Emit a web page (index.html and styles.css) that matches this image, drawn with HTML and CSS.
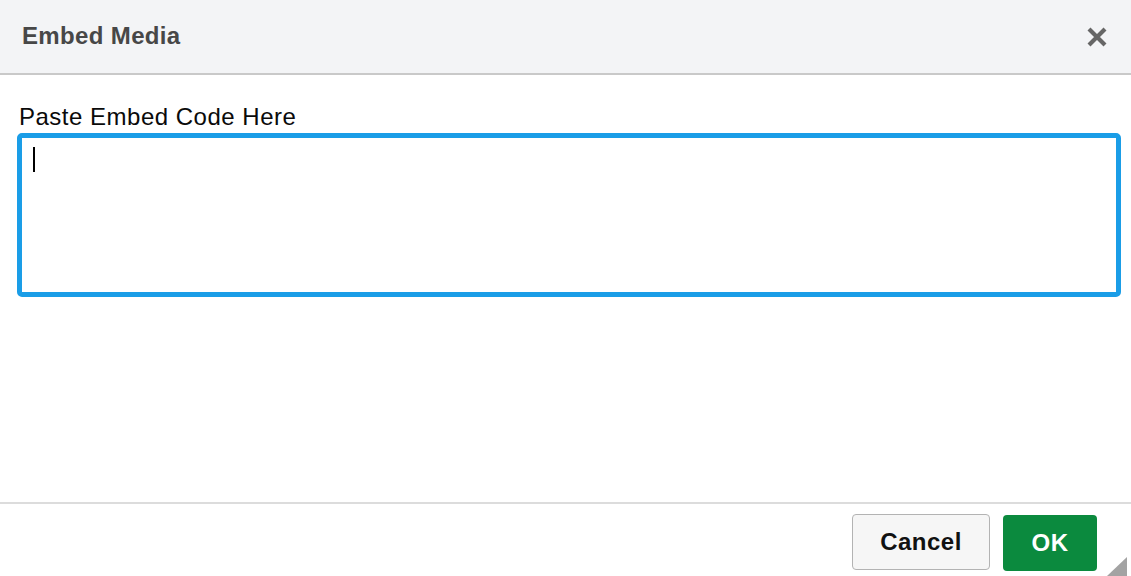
FILE: index.html
```html
<!DOCTYPE html>
<html>
<head>
<meta charset="utf-8">
<link rel="stylesheet" href="styles.css">
</head>
<body>
<div class="dialog">
  <div class="header">
    <div class="title">Embed Media</div>
    <button class="close" aria-label="Close">
      <svg width="22" height="22" viewBox="0 0 22 22"><path d="M3 3L19 19M19 3L3 19" stroke="#666" stroke-width="4.2" stroke-linecap="butt"/></svg>
    </button>
  </div>
  <div class="body">
    <label class="label">Paste Embed Code Here</label>
    <div class="textarea"><span class="caret"></span></div>
  </div>
  <div class="footer">
    <button class="btn cancel">Cancel</button>
    <button class="btn ok">OK</button>
    <span class="resize"></span>
  </div>
</div>
</body>
</html>
```
FILE: styles.css
```css
html, body { margin: 0; padding: 0; }
body {
  width: 1131px;
  height: 576px;
  overflow: hidden;
  background: #fff;
  font-family: "Liberation Sans", Arial, sans-serif;
}
.dialog {
  height: 576px;
  display: flex;
  flex-direction: column;
  position: relative;
}
.header {
  box-sizing: border-box;
  background: #f3f4f6;
  border-bottom: 2px solid #c9c9c9;
  display: flex;
  align-items: center;
  justify-content: space-between;
  padding: 0 22px 0 22px;
  height: 75px;
}
.title {
  font-size: 24px;
  font-weight: bold;
  color: #474747;
  margin-top: -1px;
  letter-spacing: 0.35px;
}
.close {
  border: 0;
  background: none;
  padding: 0;
  width: 22px;
  height: 22px;
  margin-top: 1px;
  margin-right: 1px;
  display: block;
}
.close svg { display: block; }
.body {
  flex: 1;
  padding: 29px 10px 0 17px;
}
.label {
  display: block;
  font-size: 24px;
  letter-spacing: 0.5px;
  color: #0a0a0a;
  margin-left: 2px;
  line-height: 26px;
}
.textarea {
  margin-top: 3px;
  height: 164px;
  box-sizing: border-box;
  width: 1104px;
  border: 5px solid #1a9de7;
  border-radius: 5px;
  padding: 9px 11px;
}
.caret {
  display: block;
  width: 2px;
  height: 25px;
  background: #000;
}
.footer {
  border-top: 2px solid #dcdcdc;
  height: 74px;
  box-sizing: border-box;
  display: flex;
  justify-content: flex-end;
  align-items: flex-start;
  padding: 10px 34px 0 0;
  gap: 13px;
}
.btn {
  font-family: "Liberation Sans", Arial, sans-serif;
  font-weight: bold;
  font-size: 24px;
  letter-spacing: 0.5px;
  height: 56px;
  border-radius: 4px;
  padding: 0;
  cursor: pointer;
}
.cancel {
  width: 138px;
  background: #f6f6f6;
  border: 1.5px solid #b3b3b3;
  color: #111;
}
.ok {
  width: 94px;
  background: #0b8a3e;
  border: 0;
  color: #fff;
  margin-top: 1px;
}
.resize {
  position: absolute;
  right: 4px;
  bottom: 0;
  width: 0;
  height: 0;
  border-left: 20px solid transparent;
  border-bottom: 19px solid #a3a3a3;
}
```
